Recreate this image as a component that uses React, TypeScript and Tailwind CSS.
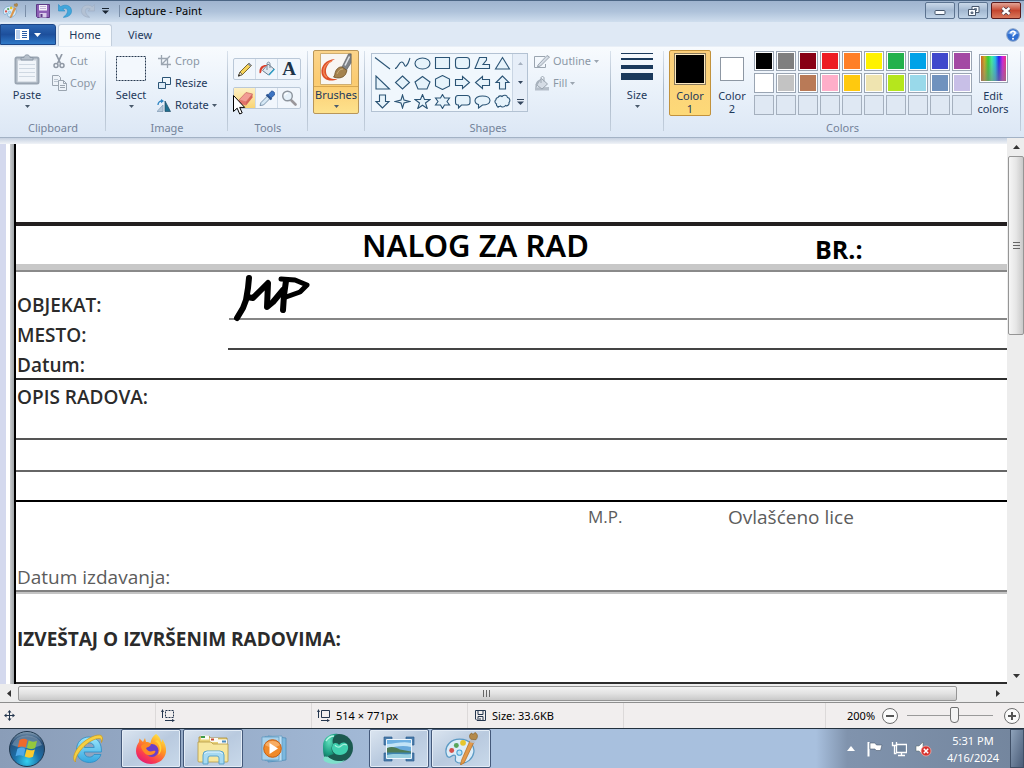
import React from "react";
import type { ReactNode } from "react";

const INK = "#2b5475";
const OFF = "#9ba5b0";

/* ---------- shared pieces ---------- */

function Svg({ w, h, box, children, className }: { w: number; h: number; box?: string; children: ReactNode; className?: string }) {
  return (
    <svg width={w} height={h} viewBox={box ?? `0 0 ${w} ${h}`} fill="none" aria-hidden="true" className={`block shrink-0 ${className ?? ""}`}>
      {children}
    </svg>
  );
}

function Caret({ color = "#4a5a6c" }: { color?: string }) {
  return (
    <Svg w={5} h={3}>
      <path d="M0 0h5L2.5 3z" fill={color} />
    </Svg>
  );
}

function Group({ label, className, children }: { label?: string; className: string; children: ReactNode }) {
  return (
    <section className={`relative flex shrink-0 flex-col pt-[3px] ${className}`}>
      <div className="flex h-[66px] items-start">{children}</div>
      <div className="mt-[3px] h-[18px] text-center leading-[18px] text-[#74839a]">{label}</div>
      <span className="absolute top-1 right-0 h-20 w-px bg-gradient-to-b from-[#d9e2ec] via-[#a9b7c7] to-[#c3cfdd]" />
    </section>
  );
}

function SmallButton({ icon, label, caret, disabled }: { icon: ReactNode; label: string; caret?: boolean; disabled?: boolean }) {
  return (
    <button type="button" disabled={disabled} className={`flex h-[22px] items-center gap-[3px] ${disabled ? "text-[#8b97a5]" : "text-[#1e395b]"}`}>
      <span className="flex w-4 justify-center">{icon}</span>
      {label}
      {caret && <Caret color={disabled ? OFF : undefined} />}
    </button>
  );
}

function BigButton({ icon, label, className }: { icon: ReactNode; label: string; className: string }) {
  return (
    <button type="button" className={`flex h-16 flex-col items-center text-[#1e395b] ${className}`}>
      <span className="flex h-[37px] items-center justify-center">{icon}</span>
      <span className="h-[18px] leading-4">{label}</span>
      <Caret />
    </button>
  );
}

/* ---------- title bar ---------- */

function PaletteIcon({ size }: { size: number }) {
  return (
    <Svg w={size} h={size} box="0 0 32 32">
      <path d="M14 7C6 7 0 13 1 20c.4 2.500 1.500 4.500 3 4.500 2.500 0 3-3 5.500-2 2 1-.5 4 1 6 2 2.500 9 2.500 13-1 5-4.500 6-11 2.500-15.500C23 8.500 18.500 7 14 7z" fill="#dcecf8" stroke="#5b9ac4" strokeWidth="1.200" />
      <circle cx="6.500" cy="18" r="2.400" fill="#d5504a" />
      <circle cx="11" cy="13" r="2.400" fill="#57a55a" />
      <circle cx="17.500" cy="10.500" r="2.800" fill="#e6c62c" />
      <circle cx="14" cy="20" r="2.500" fill="#bfe3f5" stroke="#4ba3d4" />
      <path d="M24 9l4 1-9.500 20-3.500 2 1-4.500z" fill="#e39a4a" stroke="#b46c22" strokeWidth=".7" />
      <path d="M24 10l4 1 1-3-4-1z" fill="#b9bec4" />
      <path d="M25 7c-2-2-1.500-5 1-6l1 1.500L29 .5c2.500 1 3.500 4 1 7z" fill="#b48a4a" stroke="#80591f" strokeWidth=".6" />
    </Svg>
  );
}

function TitleBar() {
  return (
    <header className="flex h-[22px] shrink-0 items-center border-t border-[#4b6584] bg-gradient-to-b from-[#9fb4cf] via-[#aec2da] to-[#cfdeee] pb-[2px] pl-[3px]">
      <PaletteIcon size={15} />
      <span className="ml-[7px] h-3 w-px bg-[#7a8ea8]" />
      <button type="button" aria-label="Save" className="ml-[10px]">
        <Svg w={14} h={14}>
          <path d="M.5.5h13v13h-12l-1-1z" fill="#8c5fb4" stroke="#5d3a86" />
          <path d="M3 1h8v5.500H3z" fill="#f4f0fa" />
          <path d="M4 2.500h6M4 4.500h6" stroke="#c3b3d8" />
          <path d="M3.500 9h7v4.500h-7z" fill="#d8ccea" />
          <path d="M4.500 10h2v3h-2z" fill="#5d3a86" />
        </Svg>
      </button>
      <button type="button" aria-label="Undo" className="ml-2">
        <Svg w={14} h={14}>
          <path d="M.500.500V7H7L4.800 4.900C7.500 3.200 9.800 4.800 9.600 7.300c-.2 2.200-1.700 3.900-4.300 6C10 13.200 13.500 11 13.500 7 13.500 1.500 7.500-.5 2.600 2.700z" fill="#41a7dc" stroke="#2a8cc4" strokeWidth=".6" />
        </Svg>
      </button>
      <button type="button" aria-label="Redo" disabled className="ml-[9px]">
        <Svg w={14} h={14}>
          <path d="M13.500.500V7H7l2.200-2.100C6.500 3.200 4.200 4.800 4.400 7.300c.2 2.200 1.700 3.900 4.300 6C4 13.200.500 11 .500 7 .500 1.500 6.500-.5 11.400 2.700z" fill="#b3c1d3" stroke="#9dadc2" strokeWidth=".6" />
        </Svg>
      </button>
      <button type="button" aria-label="Customize Quick Access Toolbar" className="ml-[7px]">
        <Svg w={7} h={6}>
          <path d="M0 .5h7" stroke="#1a2431" />
          <path d="M0 2.500h7L3.500 6z" fill="#1a2431" />
        </Svg>
      </button>
      <span className="ml-[10px] h-3 w-px bg-[#7a8ea8]" />
      <h1 className="ml-[5px] text-black">Capture - Paint</h1>
      <div className="mr-[3px] ml-auto flex gap-[3px] self-start pt-px">
        <button type="button" aria-label="Minimize" className="flex h-[17px] w-[30px] items-center justify-center rounded-[2px] border border-[#5c7390] bg-gradient-to-b from-[#c9d8e9] via-[#a3b8d1] to-[#c0d3e7]">
          <Svg w={12} h={9}>
            <rect x="1" y="4.500" width="10" height="4" rx="1" fill="#f8fbff" stroke="#46566b" />
          </Svg>
        </button>
        <button type="button" aria-label="Restore" className="flex h-[17px] w-[30px] items-center justify-center rounded-[2px] border border-[#5c7390] bg-gradient-to-b from-[#c9d8e9] via-[#a3b8d1] to-[#c0d3e7]">
          <Svg w={13} h={12}>
            <path d="M5 1.500h7v6H5z" fill="#f8fbff" stroke="#46566b" />
            <path d="M7.500 3.500h2v2h-2z" fill="#8ba0bb" stroke="#46566b" strokeWidth=".7" />
            <path d="M1.500 4.500h7v6h-7z" fill="#f8fbff" stroke="#46566b" />
            <path d="M4 7h2v1.500H4z" fill="#8ba0bb" stroke="#46566b" strokeWidth=".8" />
          </Svg>
        </button>
        <button type="button" aria-label="Close" className="flex h-[17px] w-[30px] items-center justify-center rounded-[2px] border border-[#5a1a1c] bg-gradient-to-b from-[#e2a497] via-[#c4452f] to-[#d8775c]">
          <Svg w={12} h={10}>
            <path d="M2.500 2l7 6M9.500 2l-7 6" stroke="#4c3a46" strokeWidth="4" />
            <path d="M2.500 2l7 6M9.500 2l-7 6" stroke="#fff" strokeWidth="2.400" />
          </Svg>
        </button>
      </div>
    </header>
  );
}

function TabRow() {
  return (
    <nav className="flex h-6 shrink-0 items-end bg-[#dfe9f5] pt-[2px]">
      <button type="button" aria-label="Paint menu" className="flex h-[21px] w-14 items-center justify-center gap-[5px] self-start rounded-tr-[3px] border border-[#1c4688] bg-gradient-to-b from-[#2f68b4] via-[#1d4f9c] to-[#2f79c8]">
        <Svg w={14} h={11}>
          <path d="M0 0h14v11H0z" fill="#fff" />
          <path d="M1 1h4v9H1z" fill="#b9cfec" />
          <path d="M7 2.500h5M7 4.500h5M7 6.500h5M7 8.500h5" stroke="#2b5da6" />
        </Svg>
        <Svg w={7} h={4}>
          <path d="M0 0h7L3.500 4z" fill="#fff" />
        </Svg>
      </button>
      <button type="button" className="ml-[2px] h-[22px] w-[54px] rounded-t-[3px] border border-b-0 border-[#c3cfdd] bg-[#f8fbfe] pb-px text-[#1e395b]">Home</button>
      <button type="button" className="h-[22px] w-14 text-[#1e395b]">View</button>
      <button type="button" aria-label="Help" className="mr-1 ml-auto self-center">
        <Svg w={14} h={14}>
          <circle cx="7" cy="7" r="6.300" fill="#2f6fd2" stroke="#8fa6c8" />
          <path d="M2 5.500a5.200 4.200 0 0 1 10 0c-3 1.500-7 1.500-10 0z" fill="#86b2f0" />
          <path d="M4.800 5.300c.2-3 4.700-2.600 4.300.1C8.900 6.700 7 6.800 7 8.500" stroke="#fff" strokeWidth="1.600" />
          <circle cx="7" cy="10.700" r="1" fill="#fff" />
        </Svg>
      </button>
    </nav>
  );
}

/* ---------- ribbon ---------- */

function ClipboardGroup() {
  return (
    <Group label="Clipboard" className="w-[106px]">
      <BigButton
        className="ml-[6px] w-[42px]"
        label="Paste"
        icon={
          <Svg w={26} h={32}>
            <rect x="1.500" y="4.500" width="23" height="26" rx="1.500" fill="#c5cdd6" stroke="#9aa5b2" strokeWidth="2" />
            <path d="M4 7.500h18v21H4z" fill="#f1f5fa" />
            <path d="M5 11.500h16M5 15.500h16M5 19.500h16M5 23.500h16" stroke="#cfd8e2" />
            <path d="M7 7V4.500h3C10 1 16 1 16 4.500h3V7z" fill="#b5bfca" stroke="#8e9aa8" />
          </Svg>
        }
      />
      <div className="ml-[3px] flex flex-col">
        <SmallButton
          disabled
          label="Cut"
          icon={
            <Svg w={12} h={15}>
              <path d="M3 0l4.500 9.500M9 0L4.500 9.500" stroke="#9099a5" strokeWidth="1.700" />
              <circle cx="3" cy="11.500" r="2" stroke="#9099a5" strokeWidth="1.500" />
              <circle cx="9" cy="11.500" r="2" stroke="#9099a5" strokeWidth="1.500" />
            </Svg>
          }
        />
        <SmallButton
          disabled
          label="Copy"
          icon={
            <Svg w={15} h={16}>
              <path d="M.5.500h6l2 2v8h-8z" fill="#eef3f9" stroke={OFF} />
              <path d="M2 4.500h4M2 6.500h4" stroke="#bcc6d1" />
              <path d="M6.500 5.500h5l3 3v7h-8z" fill="#eef3f9" stroke={OFF} />
              <path d="M11.500 5.500v3h3M8 10.500h5M8 12.500h5" stroke={OFF} />
            </Svg>
          }
        />
      </div>
    </Group>
  );
}

function ImageGroup() {
  return (
    <Group label="Image" className="w-[122px]">
      <BigButton
        className="ml-[5px] w-10"
        label="Select"
        icon={
          <Svg w={30} h={25}>
            <rect x=".5" y=".5" width="29" height="24" fill="#f3f8fd" stroke="#26394f" strokeDasharray="2 1" />
          </Svg>
        }
      />
      <div className="ml-[5px] flex flex-col items-start">
        <SmallButton
          disabled
          label="Crop"
          icon={
            <Svg w={13} h={13}>
              <path d="M3.500 0v9.500H13M0 3.500h9.500V13M4 9l8-8" stroke={OFF} strokeWidth="1.300" />
            </Svg>
          }
        />
        <SmallButton
          label="Resize"
          icon={
            <Svg w={13} h={12}>
              <path d="M4.500.500h8v7h-8z" fill="#eef6fc" stroke={INK} />
              <path d="M.500 5.500h7v6h-7z" fill="#dcebf7" stroke={INK} />
            </Svg>
          }
        />
        <SmallButton
          label="Rotate"
          caret
          icon={
            <Svg w={14} h={13}>
              <path d="M0 12.500h6V6z" fill="#b5c8da" stroke="#7f99b3" strokeWidth=".7" />
              <path d="M8 12.500V2l5.500 10.500z" fill="#1f6f8f" stroke="#1c4a66" strokeWidth=".7" />
              <path d="M1 6C1 3 3 2 5 2" stroke="#2b83c2" strokeWidth="1.300" />
              <path d="M4 0l3 2-3 2.200z" fill="#2b83c2" />
            </Svg>
          }
        />
      </div>
    </Group>
  );
}

const TOOL_ROWS: { name: string; active?: boolean; icon: ReactNode }[][] = [
  [
    {
      name: "Pencil",
      icon: (
        <Svg w={16} h={16}>
          <path d="M1.500 15l1.500-4 9-9 2.500 2.500-9 9z" fill="#f6d35a" stroke="#6f5a20" strokeWidth=".9" />
          <path d="M1.500 15L3 11l2.500 2.500z" fill="#f3e3c0" stroke="#444" strokeWidth=".7" />
          <path d="M10.700 3.300l2.500 2.500 1.500-1.500L12.200 1.800z" fill="#8a93a0" />
          <path d="M1.200 15.500l.6-2.200 1.500 1.500z" fill="#222" />
        </Svg>
      ),
    },
    {
      name: "Fill with color",
      icon: (
        <Svg w={16} h={16}>
          <path d="M9 3l6 5-5.500 6-6-4.500z" fill="#dfe8f0" stroke="#6a7c8f" />
          <path d="M8 9V3c0-2.500 3-2.500 3 0v4" stroke="#7b8b9c" />
          <path d="M8.500 4C3.500 3.500 0 5.500.5 12c1.200.8 2-.5 2.200-3 1-2 3-3.500 5.800-5z" fill="#d9402c" />
          <path d="M10 14l5.500-6" stroke="#2fa0c8" strokeWidth="1.300" />
        </Svg>
      ),
    },
    {
      name: "Text",
      icon: <span className="font-['Liberation_Serif',serif] text-[19px] leading-5 font-bold text-[#1d3348]">A</span>,
    },
  ],
  [
    {
      name: "Eraser",
      active: true,
      icon: (
        <Svg w={16} h={16}>
          <path d="M2 10l7-7.500 6.500 1.500L9 12z" fill="#f29c94" stroke="#c4675f" strokeWidth=".7" />
          <path d="M2 10l7 2v3.500L2 13.500z" fill="#e2736a" />
          <path d="M9 12l6.500-8v3.500L9 15.500z" fill="#d5635b" />
        </Svg>
      ),
    },
    {
      name: "Color picker",
      icon: (
        <Svg w={16} h={16}>
          <path d="M1 15.500l1-3L8.500 6 11 8.500 4.500 15z" fill="#d6e8f5" stroke="#65809a" strokeWidth=".8" />
          <path d="M7.500 4.500l5 5" stroke="#2a5390" strokeWidth="2.200" />
          <path d="M9 5l3-3.500c1.500-1.500 5 1.500 3.500 3.500L12 8z" fill="#3d74c2" stroke="#2a5390" strokeWidth=".8" />
        </Svg>
      ),
    },
    {
      name: "Magnifier",
      icon: (
        <Svg w={16} h={16}>
          <path d="M10.500 10.500l4 4" stroke="#9a979b" strokeWidth="2.600" strokeLinecap="round" />
          <circle cx="6.500" cy="6" r="4.800" fill="#e6f1fa" stroke="#8d949d" strokeWidth="1.400" />
          <path d="M3.800 5.500c.3-1.500 1.500-2.300 3-2.300" stroke="#fff" strokeWidth="1.200" />
        </Svg>
      ),
    },
  ],
];

function ToolsGroup() {
  return (
    <Group label="Tools" className="w-[80px]">
      <div className="mt-2 ml-[5px] flex flex-col gap-[7px]">
        {TOOL_ROWS.map((row, i) => (
          <div key={i} className="flex h-[22px] divide-x divide-[#cfdbe8] rounded-[2px] border border-[#bac8d8] bg-[#f1f6fc]">
            {row.map((t) => (
              <button key={t.name} type="button" aria-label={t.name} className={`flex w-[22px] grow items-center justify-center ${t.active ? "bg-gradient-to-b from-[#fdf0c4] to-[#f9d472]" : ""}`}>
                {t.icon}
              </button>
            ))}
          </div>
        ))}
      </div>
      <Svg w={13} h={20} className="absolute top-12 left-[5px]">
        <path d="M.5.500v16l3.700-3.300L6.700 19l2.500-1.100-2.500-5.500h5z" fill="#fff" stroke="#000" />
      </Svg>
    </Group>
  );
}

function BrushesGroup() {
  return (
    <Group className="w-[57px]">
      <button type="button" className="ml-[5px] flex h-16 w-[46px] flex-col items-center rounded-[2px] border border-[#b8965a] bg-gradient-to-b from-[#fbd48a] via-[#fbcb70] to-[#fde28d] text-[#1e395b]">
        <span className="flex h-9 w-full items-center justify-center border-b border-[#d9a850]">
          <Svg w={32} h={32}>
            <path d="M.5.500h31v31H.5z" fill="#f8f6f3" stroke="#cfae72" />
            <path d="M15 6C6 6.500.5 13 1.500 20c1 7 9 9.500 16 6-6 .5-11-1.500-11.500-7C5.500 14 9 9 15 6z" fill="#dd4f28" />
            <path d="M12 8C6 10.500 3 15 3.800 20c.5 2 1.700 3.500 3.200 4.500" stroke="#f28a5a" strokeWidth="1.300" />
            <path d="M22 14l6.500-13H31v9l-4.500 7z" fill="#7f8388" stroke="#54585d" strokeWidth=".6" />
            <path d="M25 12.500l4.500-9" stroke="#dfe3e8" strokeWidth="1.500" />
            <path d="M22 14l5 3.500-1.500 4c-3 4-8 4-12 2.500 1.500-1 1-3.500 2.500-6.500 1.500-2.500 3.500-4 6-3.500z" fill="#a5834e" stroke="#6e4f22" strokeWidth=".8" />
            <path d="M17 21c1.500-3 3-5 6-5" stroke="#c9ad78" />
          </Svg>
        </span>
        <span className="h-[18px] leading-4">Brushes</span>
        <Caret />
      </button>
    </Group>
  );
}

const SHAPES: { name: string; d: string }[] = [
  { name: "Line", d: "M1 1.500L16 13" },
  { name: "Curve", d: "M1 12.500C4 12.500 5 5 8 6S10 12 12.500 9.500 15 4 16 2" },
  { name: "Oval", d: "M8.500 2C13 2 16 4.500 16 7.500S13 13 8.500 13 1 10.500 1 7.500 4 2 8.500 2z" },
  { name: "Rectangle", d: "M1.500 1.500h14v11h-14z" },
  { name: "Rounded rectangle", d: "M4.500 1.500h8q3 0 3 3v5q0 3-3 3h-8q-3 0-3-3v-5q0-3 3-3z" },
  { name: "Polygon", d: "M1 12.500L5.500 1.500h7v2.500L9 8.500h6.500v4z" },
  { name: "Triangle", d: "M8.500 1.500l7 11.500h-14z" },
  { name: "Right triangle", d: "M2 1v13h13.500z" },
  { name: "Diamond", d: "M8.500 1l7 6.500-7 6.500-7-6.500z" },
  { name: "Pentagon", d: "M8.500 1.500L16 7l-3 7H4L1 7z" },
  { name: "Hexagon", d: "M8.500.5l7 3.500v7l-7 3.500-7-3.500V4z" },
  { name: "Right arrow", d: "M1.500 4.500h7v-3l7 6-7 6v-3h-7z" },
  { name: "Left arrow", d: "M15.500 4.500h-7v-3l-7 6 7 6v-3h7z" },
  { name: "Up arrow", d: "M8.500 1L2 7.500h3.500v6.500h6V7.500H15z" },
  { name: "Down arrow", d: "M8.500 14L2 7.500h3.500V1h6v6.500H15z" },
  { name: "Four-point star", d: "M8.500 1l1.500 5 5.500 1.500L10 9l-1.500 5L7 9 1.500 7.500 7 6z" },
  { name: "Five-point star", d: "M8.500.5l2 5h5.500L11.500 9l1.700 5.500-4.700-3.300-4.700 3.300L5.500 9 1 5.500h5.500z" },
  { name: "Six-point star", d: "M8.500.5l2 3.500h5L13 7.500l2.500 3.500h-5l-2 3.500-2-3.500h-5L4 7.500 1.500 4h5z" },
  { name: "Rounded callout", d: "M4 1.500h9q3 0 3 3v4q0 2.500-3 2.500H7.500L4.500 14v-3H4q-2.500 0-2.500-2.500v-4q0-3 2.500-3z" },
  { name: "Oval callout", d: "M8.500 2C13 2 16 4 16 6.500S13 11 8.500 11L4.500 14v-3.500C2.500 10 1 8.500 1 6.500 1 4 4 2 8.500 2z" },
  { name: "Cloud callout", d: "M4 3.500C5 1.500 7 1.500 8 2.500 10 .5 13 1 13.500 3.500 16 4 16.500 7 15 8.500c.5 2.500-2 4-3.500 3-1.500 2-4 2-5 .5C4 13.500 2 12 2.500 10 .5 9 .5 6.500 2 5.800 1.800 4.500 3 3.500 4 3.500zM3.500 13.500h1" },
];

function ShapesGroup() {
  return (
    <Group label="Shapes" className="w-[246px]">
      <div className="mt-[3px] ml-[6px] flex border border-[#b3c2d3] bg-[#f0f7fd]">
        <div className="grid grid-cols-7">
          {SHAPES.map((s) => (
            <button key={s.name} type="button" aria-label={s.name} className="flex h-[19px] w-5 items-center justify-center">
              <Svg w={17} h={15}>
                <path d={s.d} stroke={INK} strokeWidth="1.100" fill={s.name === "Line" || s.name === "Curve" ? "none" : "#e6f3fb"} />
              </Svg>
            </button>
          ))}
        </div>
        <div className="flex w-[15px] flex-col border-l border-[#c9d5e3] bg-[#e6eef8]">
          <button type="button" aria-label="Scroll shapes up" disabled className="flex h-[19px] items-center justify-center">
            <Svg w={5} h={3}><path d="M0 3h5L2.500 0z" fill="#a6b1bf" /></Svg>
          </button>
          <button type="button" aria-label="Scroll shapes down" className="flex h-[19px] items-center justify-center"><Caret color="#34475e" /></button>
          <button type="button" aria-label="More shapes" className="flex h-[19px] items-center justify-center">
            <Svg w={7} h={6}><path d="M0 .500h7" stroke="#34475e" /><path d="M0 2.500h7L3.500 6z" fill="#34475e" /></Svg>
          </button>
        </div>
      </div>
      <div className="ml-[6px] flex flex-col items-start">
        <SmallButton
          disabled
          caret
          label="Outline"
          icon={
            <Svg w={16} h={13}>
              <path d="M11 1.500H.500v11h11V9" stroke={OFF} />
              <path d="M4 10L13 .5l2.500 1.500-9 9-3 .800z" fill="#d5dce5" stroke={OFF} />
            </Svg>
          }
        />
        <SmallButton
          disabled
          caret
          label="Fill"
          icon={
            <Svg w={16} h={15}>
              <path d="M1 14.500v-3l14-.500v3.500z" fill="#b5bec9" />
              <path d="M7.500 2.500l6 5.500-5.500 5-6-4.500z" fill="#d5dce5" stroke={OFF} />
              <path d="M7 7V2C7 0 10 0 10 2v3.500" stroke={OFF} />
              <path d="M7 3C3 4 1 7 1.500 12c1 .5 1.500-1 2-3z" fill="#a7b1bc" />
            </Svg>
          }
        />
      </div>
    </Group>
  );
}

function SizeGroup() {
  return (
    <Group className="w-[53px]">
      <BigButton
        className="ml-[5px] w-[42px]"
        label="Size"
        icon={
          <Svg w={32} h={29} className="mb-1">
            <path d="M0 1.500h32" stroke="#1b3a5c" />
            <path d="M0 7h32" stroke="#1b3a5c" strokeWidth="2" />
            <path d="M0 15h32" stroke="#1b3a5c" strokeWidth="4" />
            <path d="M0 24.500h32" stroke="#1b3a5c" strokeWidth="7" />
          </Svg>
        }
      />
    </Group>
  );
}

const PALETTE: string[] = [
  "bg-[#000000]", "bg-[#7f7f7f]", "bg-[#880015]", "bg-[#ed1c24]", "bg-[#ff7f27]", "bg-[#fff200]", "bg-[#22b14c]", "bg-[#00a2e8]", "bg-[#3f48cc]", "bg-[#a349a4]",
  "bg-[#ffffff]", "bg-[#c3c3c3]", "bg-[#b97a57]", "bg-[#ffaec9]", "bg-[#ffc90e]", "bg-[#efe4b0]", "bg-[#b5e61d]", "bg-[#99d9ea]", "bg-[#7092be]", "bg-[#c8bfe7]",
];

function ColorsGroup() {
  return (
    <Group label="Colors" className="w-[357px]">
      <button type="button" className="ml-[5px] flex h-[66px] w-[42px] flex-col items-center rounded-[2px] border border-[#c2923c] bg-gradient-to-b from-[#fbce7a] to-[#fdd978] pt-[2px] text-[#1e395b]">
        <span className="h-8 w-8 border border-[#8a7a5a] bg-black ring-1 ring-[#fce9c0] ring-inset" />
        <span className="mt-1 leading-[13px]">Color<br />1</span>
      </button>
      <button type="button" className="flex h-[66px] w-[42px] flex-col items-center pt-[7px] text-[#1e395b]">
        <span className="h-6 w-6 border border-[#8d97a3] bg-white" />
        <span className="mt-2 leading-[13px]">Color<br />2</span>
      </button>
      <div className="mt-px ml-px grid grid-cols-10 gap-[2px]">
        {PALETTE.map((c) => (
          <button key={c} type="button" aria-label={c.slice(4, -1)} className="h-5 w-5 border border-[#9aa5b3] bg-white p-px">
            <span className={`block h-full w-full ${c}`} />
          </button>
        ))}
        {Array.from({ length: 10 }, (_, i) => (
          <button key={i} type="button" aria-label={`Custom color ${i + 1}`} className="h-5 w-5 border border-[#a5b0be] bg-[#dfe8f3]" />
        ))}
      </div>
      <button type="button" className="ml-[3px] flex h-[66px] w-9 flex-col items-center pt-1 text-[#1e395b]">
        <span className="h-[29px] w-[29px] border border-[#9aa5b3] bg-white p-px">
          <span className="block h-full w-full bg-[linear-gradient(to_bottom,transparent,#80808099),linear-gradient(to_right,#d06020,#c8b020,#30d030,#40f0a0,#20c0f0,#2020f0,#d020e0,#f03080)]" />
        </span>
        <span className="mt-[6px] leading-[13px]">Edit<br />colors</span>
      </button>
    </Group>
  );
}

/* ---------- canvas and document ---------- */

function WorkOrder() {
  return (
    <article className="min-w-0 flex-1 overflow-hidden border-l-2 border-black bg-white font-['Open_Sans','Noto_Sans',sans-serif] text-[19px] leading-[30px] text-[#2b2b2b]">
      <div className="h-[82px] border-b-4 border-[#231f20]" />
      <div className="flex h-[38px] items-center text-black">
        <h2 className="ml-[346px] w-[453px] font-['Noto_Sans',sans-serif] text-[31px] leading-[38px] font-semibold">NALOG ZA RAD</h2>
        <span className="pt-2 text-[25px] font-bold">BR.:</span>
      </div>
      <div className="h-2 border-b-2 border-[#8a8a8a] bg-[#c8c8c8]" />
      <div className="flex h-12 items-end">
        <span className="w-[213px] pl-px font-semibold">OBJEKAT:</span>
        <span className="relative h-full flex-1 border-b-2 border-[#868686]">
          <Svg w={84} h={50} box="229 272 84 50" className="absolute top-0 left-0">
            <g stroke="#000" strokeWidth="6" strokeLinecap="round" strokeLinejoin="round">
              <path d="M249 278l-1 10-2 12-3 8-6 10" />
              <path d="M247 297l6 1 8-8 7-7-1 24 6-5 10-12" />
              <path d="M286 281l-2 14-1 15" />
              <path d="M281 279l14 1 12 5-7 7-14 5" strokeWidth="5" />
            </g>
          </Svg>
        </span>
      </div>
      <div className="flex h-[30px] items-end">
        <span className="w-[212px] pl-px font-semibold">MESTO:</span>
        <span className="h-full flex-1 border-b-2 border-[#444]" />
      </div>
      <div className="h-[30px] border-b-2 border-[#2c2c2c] pl-px font-semibold">Datum:</div>
      <div className="h-[60px] border-b-2 border-[#555] pt-[2px] pl-px font-semibold">OPIS RADOVA:</div>
      <div className="h-8 border-b-2 border-[#666]" />
      <div className="h-[30px] border-b-2 border-black" />
      <div className="flex h-[60px] text-[#5c5c5c]">
        <span className="ml-[572px] w-[140px] text-[17px]">M.P.</span>
        <span>Ovlašćeno lice</span>
      </div>
      <div className="h-[30px] border-b-2 border-[#808080] pl-px text-[#5c5c5c]">Datum izdavanja:</div>
      <div className="h-[92px] border-t-2 border-b-2 border-t-[#c4c4c4] border-b-[#2c2c2c] pt-[30px] pl-px font-bold">IZVEŠTAJ O IZVRŠENIM RADOVIMA:</div>
    </article>
  );
}

function VerticalScroll() {
  return (
    <div className="flex w-4 shrink-0 flex-col bg-[#ededed]">
      <button type="button" aria-label="Scroll up" className="flex h-[18px] shrink-0 items-center justify-center">
        <Svg w={7} h={4}><path d="M0 4h7L3.500 0z" fill="#333" /></Svg>
      </button>
      <div className="flex-1">
        <div className="flex h-[35%] min-h-4 items-center justify-center rounded-[2px] border border-[#959595] bg-gradient-to-r from-[#f6f6f6] via-[#e6e6e6] to-[#c9c9c9]">
          <Svg w={7} h={8}><path d="M0 .500h7M0 3.500h7M0 6.500h7" stroke="#666" /></Svg>
        </div>
      </div>
      <button type="button" aria-label="Scroll down" className="flex h-4 shrink-0 items-center justify-center">
        <Svg w={7} h={4}><path d="M0 0h7L3.500 4z" fill="#333" /></Svg>
      </button>
    </div>
  );
}

function HorizontalScroll() {
  return (
    <div className="flex h-[18px] shrink-0 items-stretch bg-[#ededed] pt-[2px] pb-px pr-[18px]">
      <button type="button" aria-label="Scroll left" className="flex w-[18px] items-center justify-center">
        <Svg w={4} h={7}><path d="M4 0v7L0 3.500z" fill="#333" /></Svg>
      </button>
      <div className="flex flex-1">
        <div className="flex w-[96.600%] items-center justify-center rounded-[2px] border border-[#959595] bg-gradient-to-b from-[#f2f2f2] via-[#e2e2e2] to-[#c9c9c9]">
          <Svg w={8} h={7}><path d="M.500 0v7M3.500 0v7M6.500 0v7" stroke="#666" /></Svg>
        </div>
      </div>
      <button type="button" aria-label="Scroll right" className="flex w-4 items-center justify-center">
        <Svg w={4} h={7}><path d="M0 0v7l4-3.500z" fill="#333" /></Svg>
      </button>
    </div>
  );
}

/* ---------- status bar ---------- */

function StatusCell({ children, className }: { children?: ReactNode; className: string }) {
  return <div className={`flex items-center gap-[6px] border-r border-[#dcd9d9] ${className}`}>{children}</div>;
}

function StatusBar() {
  return (
    <footer className="flex h-[27px] shrink-0 items-stretch border-t border-b border-t-[#8e8e8e] border-b-[#22303d] bg-[#f1eeee] text-black">
      <StatusCell className="w-[156px] pl-1">
        <Svg w={11} h={11}>
          <path d="M5.500 1v9M1 5.500h9" stroke="#24364e" />
          <path d="M5.500 0L3.500 2.500h4zM5.500 11l-2-2.500h4zM0 5.500l2.500-2v4zM11 5.500l-2.500-2v4z" fill="#24364e" />
        </Svg>
      </StatusCell>
      <StatusCell className="w-[156px] pl-[5px]">
        <Svg w={14} h={13}>
          <path d="M1.500 1v8M4 11.500h8" stroke="#24364e" />
          <path d="M0 3l1.500-3L3 3zM11 10l3 1.500L11 13z" fill="#24364e" />
          <path d="M4.500 1.500h8v7h-8z" stroke="#24364e" strokeDasharray="2 1" />
        </Svg>
      </StatusCell>
      <StatusCell className="w-[156px] pl-[5px]">
        <Svg w={13} h={13}>
          <path d="M1.500 1v8M4 11.500h7" stroke="#24364e" />
          <path d="M0 3l1.500-3L3 3zM10 10l3 1.500L10 13z" fill="#24364e" />
          <path d="M4.500 1.500h8v7h-8z" stroke="#24364e" />
        </Svg>
        514 × 771px
      </StatusCell>
      <StatusCell className="w-[156px] pl-[7px]">
        <Svg w={11} h={11}>
          <path d="M.500.500h10v10H2L.500 9z" stroke="#24364e" />
          <path d="M3 1v3.500h5V1M3 10.500v-4h5v4M5 8v2" stroke="#24364e" />
        </Svg>
        Size: 33.6KB
      </StatusCell>
      <StatusCell className="min-w-0 flex-1" />
      <div className="flex w-[198px] items-center pl-[21px]">
        <output className="w-[34px]">200%</output>
        <button type="button" aria-label="Zoom out">
          <Svg w={18} h={18}>
            <circle cx="9" cy="9" r="7.500" fill="#fafafa" stroke="#6d6d6d" />
            <path d="M5 9h8" stroke="#555" strokeWidth="2" />
          </Svg>
        </button>
        <input
          type="range"
          aria-label="Zoom"
          min={0}
          max={100}
          defaultValue={56}
          className="mx-2 h-5 w-[86px] appearance-none bg-transparent [&::-webkit-slider-runnable-track]:h-px [&::-webkit-slider-runnable-track]:bg-[#9a9a9a] [&::-webkit-slider-thumb]:-mt-2 [&::-webkit-slider-thumb]:h-4 [&::-webkit-slider-thumb]:w-[9px] [&::-webkit-slider-thumb]:appearance-none [&::-webkit-slider-thumb]:rounded-t-[2px] [&::-webkit-slider-thumb]:rounded-b-[4px] [&::-webkit-slider-thumb]:border [&::-webkit-slider-thumb]:border-[#707070] [&::-webkit-slider-thumb]:bg-[#f4f4f4]"
        />
        <button type="button" aria-label="Zoom in" className="ml-[2px]">
          <Svg w={18} h={18}>
            <circle cx="9" cy="9" r="7.500" fill="#fafafa" stroke="#6d6d6d" />
            <path d="M5 9h8M9 5v8" stroke="#555" strokeWidth="2" />
          </Svg>
        </button>
      </div>
    </footer>
  );
}

/* ---------- taskbar ---------- */

function StartOrb() {
  return (
    <Svg w={38} h={38}>
      <defs>
        <radialGradient id="orb" cx=".5" cy=".85" r=".9">
          <stop offset="0" stopColor="#35d0f0" />
          <stop offset=".4" stopColor="#1c6fa8" />
          <stop offset=".75" stopColor="#274f78" />
          <stop offset="1" stopColor="#a8bccb" />
        </radialGradient>
      </defs>
      <circle cx="19" cy="19" r="17.500" fill="url(#orb)" stroke="#20384f" />
      <path d="M4 15a15.500 13 0 0 1 30 0c-9 4-21 4-30 0z" fill="#fff" opacity=".25" />
      <path d="M11.500 10c3-1.600 5.500-1.500 8 0l-1.800 7.500c-2.500-1.400-5-1.500-8 0z" fill="#ee6a2c" />
      <path d="M20.700 10.500c2.800 1.500 5.500 1.500 8.300.2l-1.800 7.400c-3 1.400-5.500 1.200-8.300-.200z" fill="#95c83d" />
      <path d="M9.400 18.700c3-1.500 5.500-1.400 8 0l-1.900 7.500c-2.500-1.400-5-1.400-8 0z" fill="#4fa8e8" />
      <path d="M18.600 19.200c2.800 1.500 5.400 1.500 8.300.200L25 26.800c-3 1.400-5.500 1.200-8.300-.200z" fill="#fbcb2e" />
    </Svg>
  );
}

function IeIcon() {
  return (
    <Svg w={32} h={32}>
      <defs>
        <linearGradient id="ie" x1="0" y1="0" x2="0" y2="1">
          <stop offset="0" stopColor="#9be6fc" />
          <stop offset="1" stopColor="#35a6df" />
        </linearGradient>
      </defs>
      <path d="M17 4C9.500 4 4.500 9.500 4.500 17S10 29.500 17.500 29.500c5.500 0 9.700-3 11.500-8h-7c-1 1.800-2.500 2.600-4.600 2.600-3.200 0-5-1.900-5.200-5.100h17.200C30 10.500 25.500 4 17 4zm-4.700 10.500c.5-3 2.300-4.700 5-4.700s4.600 1.700 4.900 4.700z" fill="url(#ie)" stroke="#2a8cc4" strokeWidth=".8" />
      <path d="M3.500 29C-1 26 3 16 11 9.500 19 3 28 0 30 3.500c1 1.500.5 4-.5 6 .3-2.500-.3-4-2.500-4-4 0-10 3-15 8-6 6-9 12-8.500 15.500z" fill="#f5cf43" stroke="#c99620" strokeWidth=".7" />
    </Svg>
  );
}

function FirefoxIcon() {
  return (
    <Svg w={32} h={32}>
      <defs>
        <linearGradient id="fx" x1=".85" y1="0" x2=".2" y2="1">
          <stop offset="0" stopColor="#fff04a" />
          <stop offset=".4" stopColor="#ff9522" />
          <stop offset=".75" stopColor="#fa3c50" />
          <stop offset="1" stopColor="#e0167c" />
        </linearGradient>
      </defs>
      <path d="M21 1c4 3 5 6 5 8 1.500-.5 1-2 1-3 3 4 4.500 8 4 13-1 7-7 12-15 12S1 25.500 1 18c0-4 1.500-7 3-9l.5-3.500L8 9l2-4 1 4c2 0 3.500.5 4.500 1C16 6 18 3 21 1z" fill="url(#fx)" />
      <circle cx="17" cy="17.500" r="6.500" fill="#6a3fc8" />
      <path d="M6 13c3-3 7-3 10-1.500-1 2-3 2.500-5 3.500 1 3 4 4 7 3 2-.7 3 0 2 1.500-2 3-7 4-10 1-2-2-4-5-4-7.500z" fill="#ff8a24" />
      <path d="M20 8c5 3 6 9 3 14 4-2 5-10 0-15z" fill="#ffd33a" />
    </Svg>
  );
}

function ExplorerIcon() {
  return (
    <Svg w={34} h={32}>
      <path d="M3 4l10-1 1 2h17v22H3z" fill="#e9d27a" stroke="#a98a34" strokeWidth=".8" />
      <path d="M5 2.500h8v4H5z" fill="#fbfbf4" /><path d="M5 3h4v2H5z" fill="#3e9b48" />
      <path d="M14 5h8v4h-8z" fill="#fbfbf4" /><path d="M15 5.500h3v2h-3z" fill="#c74d32" />
      <path d="M22 6.500h9v5h-9z" fill="#fbfbf4" /><path d="M26 7.500h4v2h-4z" fill="#4e8fc4" />
      <path d="M2 9h13l2 2h15v17q0 1-1 1H3q-1 0-1-1z" fill="#f7e79e" stroke="#b59a44" strokeWidth=".8" />
      <path d="M7 31V22q0-4 4-4h13q4 0 4 4v9h-5v-6q0-2-2-2h-7q-2 0-2 2v6z" fill="#a6daf2" stroke="#5aa3cb" />
      <path d="M8.500 21q1-2 3-2h12q2 0 3 2" stroke="#e8f8ff" />
    </Svg>
  );
}

function MediaIcon() {
  return (
    <Svg w={28} h={28}>
      <path d="M7 1l18 2v22l-18 2z" fill="#7cb8df" stroke="#4b88b2" strokeWidth=".7" />
      <path d="M4 1.500l17-.5v25l-17-.5z" fill="#bfe0f4" stroke="#5a97bf" strokeWidth=".7" />
      <path d="M1 2h17v23H1z" fill="#a8d2ec" stroke="#5a97bf" strokeWidth=".7" />
      <circle cx="11.500" cy="13.500" r="8.800" fill="#f08a2a" stroke="#c65e12" />
      <path d="M4 10a8 6 0 0 1 15 0c-5 3-10 3-15 0z" fill="#fbc48c" opacity=".6" />
      <path d="M8.500 8v11l8.500-5.500z" fill="#fff" />
    </Svg>
  );
}

function GreenIcon() {
  return (
    <Svg w={34} h={32}>
      <defs>
        <radialGradient id="teal" cx=".4" cy=".3" r=".8">
          <stop offset="0" stopColor="#5fe0bd" />
          <stop offset=".6" stopColor="#1c9d81" />
          <stop offset="1" stopColor="#10594d" />
        </radialGradient>
      </defs>
      <circle cx="18" cy="15" r="14" fill="#1b5a50" />
      <path d="M2 13C2 5 9 0 17 1c-5 2-6 6-5 10-2 3-2 7 1 10-3 1-6 1-9 5-2-4-2-9-2-13z" fill="url(#teal)" />
      <path d="M12 11c2-2 5-1 6 1 3-4 8-3 9 1 1 5-3 9-8 9-6 0-10-5-7-11z" fill="#3fcfae" />
      <path d="M14 12c1 2 4 3 6 1 2-2 4-2 6-1" stroke="#a3f1dc" strokeWidth="1.200" />
      <path d="M3 24c4-2 7 4 14 4 3 0 5 0 7-1-3 4-14 5-19 2-3-1-3-4-2-5z" fill="#7fe0cb" />
      <path d="M5 8c2-3 4-5 8-5" stroke="#b9f7e6" strokeWidth="1.500" />
    </Svg>
  );
}

function PictureIcon() {
  return (
    <Svg w={32} h={28}>
      <path d="M1 2h8v3H4v5H1zM31 2h-8v3h5v5h3zM1 26h8v-3H4v-5H1zM31 26h-8v-3h5v-5h3z" fill="#4a7cab" stroke="#2f5f8f" strokeWidth=".7" />
      <path d="M3.500 4.500h25v19h-25z" fill="#69aadb" stroke="#eef6fc" />
      <path d="M4 5h24v7c-7-2-16-1-24 2z" fill="#c3e4f7" />
      <path d="M4 5h24v3C19 6 12 9 4 9z" fill="#6fb1e2" />
      <path d="M4 13c4-2 9-1 13 1.500l11 2V18H4z" fill="#4d7b55" />
      <path d="M4 17.500h24V23H4z" fill="#3f86b0" />
      <path d="M4 20c7-2 15 0 24-1v4H4z" fill="#9ad0e0" />
    </Svg>
  );
}

function TaskButton({ label, open, width, children }: { label: string; open?: boolean; width: string; children: ReactNode }) {
  return (
    <button
      type="button"
      aria-label={label}
      className={`flex h-[39px] items-center justify-center ${width} ${open ? "rounded-[2px] border border-[#44597a] bg-gradient-to-br from-[#dbe5f0] via-[#b9cadf] to-[#c9d9ea] ring-1 ring-[#e3ecf6] ring-inset" : ""}`}
    >
      {children}
    </button>
  );
}

function Taskbar() {
  return (
    <div className="flex h-[39px] shrink-0 items-stretch bg-gradient-to-r from-[#8a9db8] via-[#a8c0de] via-45% to-[#a8c0de]">
      <div className="flex min-w-0 flex-1 items-start">
        <TaskButton label="Start" width="w-[54px]"><StartOrb /></TaskButton>
        <TaskButton label="Internet Explorer" width="w-[67px]"><IeIcon /></TaskButton>
        <TaskButton label="Firefox" open width="w-[60px]"><FirefoxIcon /></TaskButton>
        <span className="w-[2px]" />
        <TaskButton label="Windows Explorer" open width="w-[60px]"><ExplorerIcon /></TaskButton>
        <TaskButton label="Media Player" width="w-[63px]"><MediaIcon /></TaskButton>
        <TaskButton label="Camtasia" width="w-[63px]"><GreenIcon /></TaskButton>
        <TaskButton label="Photo Viewer" open width="w-[60px]"><PictureIcon /></TaskButton>
        <span className="w-[2px]" />
        <TaskButton label="Paint" open width="w-[60px]"><PaletteIcon size={33} /></TaskButton>
      </div>
      <div className="flex w-[208px] items-center bg-gradient-to-r from-[#a8c0de] via-[#8093ad] via-15% to-[#73859d] pl-[31px] text-white">
        <button type="button" aria-label="Show hidden icons">
          <Svg w={8} h={5}><path d="M0 5h8L4 0z" fill="#fff" /></Svg>
        </button>
        <Svg w={16} h={16} className="ml-3">
          <path d="M1.500 1v14.500" stroke="#fff" strokeWidth="2" />
          <path d="M3 2h5l1.500 2H15l-1.500 5.500H9L8 8H3z" fill="#fff" stroke="#4a5a70" strokeWidth=".6" />
        </Svg>
        <Svg w={16} h={16} className="ml-2">
          <path d="M5.500 3.500h10v8h-10z" fill="#6f839c" stroke="#fff" strokeWidth="1.300" />
          <path d="M10.500 12v2.500M7 14.500h7" stroke="#fff" strokeWidth="1.300" />
          <path d="M1.500 1v3.500h4V1M3.500 5v7.500h2" stroke="#fff" strokeWidth="1.300" />
        </Svg>
        <Svg w={17} h={16} className="ml-2">
          <path d="M1 5h3l4-4v13l-4-4H1z" fill="#fff" stroke="#566" strokeWidth=".5" />
          <circle cx="11" cy="10" r="5" fill="#d8322e" stroke="#f3b7b0" strokeWidth=".7" />
          <path d="M8.800 7.800l4.400 4.400M13.200 7.800l-4.400 4.400" stroke="#fff" strokeWidth="1.500" />
        </Svg>
        <time className="flex-1 pl-1 text-center leading-[17px]">5:31 PM<br />4/16/2024</time>
        <button type="button" aria-label="Show desktop" className="h-full w-[14px] border border-[#3f4f66] bg-gradient-to-br from-[#8fa3bb] to-[#4b5d78]" />
      </div>
    </div>
  );
}

export default function App() {
  return (
    <div className="flex h-screen flex-col overflow-hidden bg-[#d3dbe8] font-['Noto_Sans','Open_Sans',sans-serif] text-[11px] leading-4">
      <TitleBar />
      <TabRow />
      <div className="flex h-[92px] shrink-0 overflow-hidden border-t border-b border-t-[#e9eff7] border-b-[#a3b2c5] bg-gradient-to-b from-[#f8fbfe] via-[#e9f1fa] to-[#dce7f5]">
        <ClipboardGroup />
        <ImageGroup />
        <ToolsGroup />
        <BrushesGroup />
        <ShapesGroup />
        <SizeGroup />
        <ColorsGroup />
      </div>
      <main className="flex min-h-0 flex-1 bg-[#ededed]">
        <div className="mr-px flex min-w-0 flex-1 bg-gradient-to-b from-[#c6d1e1] to-white to-[8px] pt-[6px]">
          <div className="w-[6px] bg-[#d4d9ee]" />
          <div className="w-1 bg-white" />
          <div className="w-1 bg-gradient-to-r from-[#c9cccf] to-[#9ea3a6]" />
          <WorkOrder />
        </div>
        <VerticalScroll />
      </main>
      <HorizontalScroll />
      <StatusBar />
      <Taskbar />
    </div>
  );
}
